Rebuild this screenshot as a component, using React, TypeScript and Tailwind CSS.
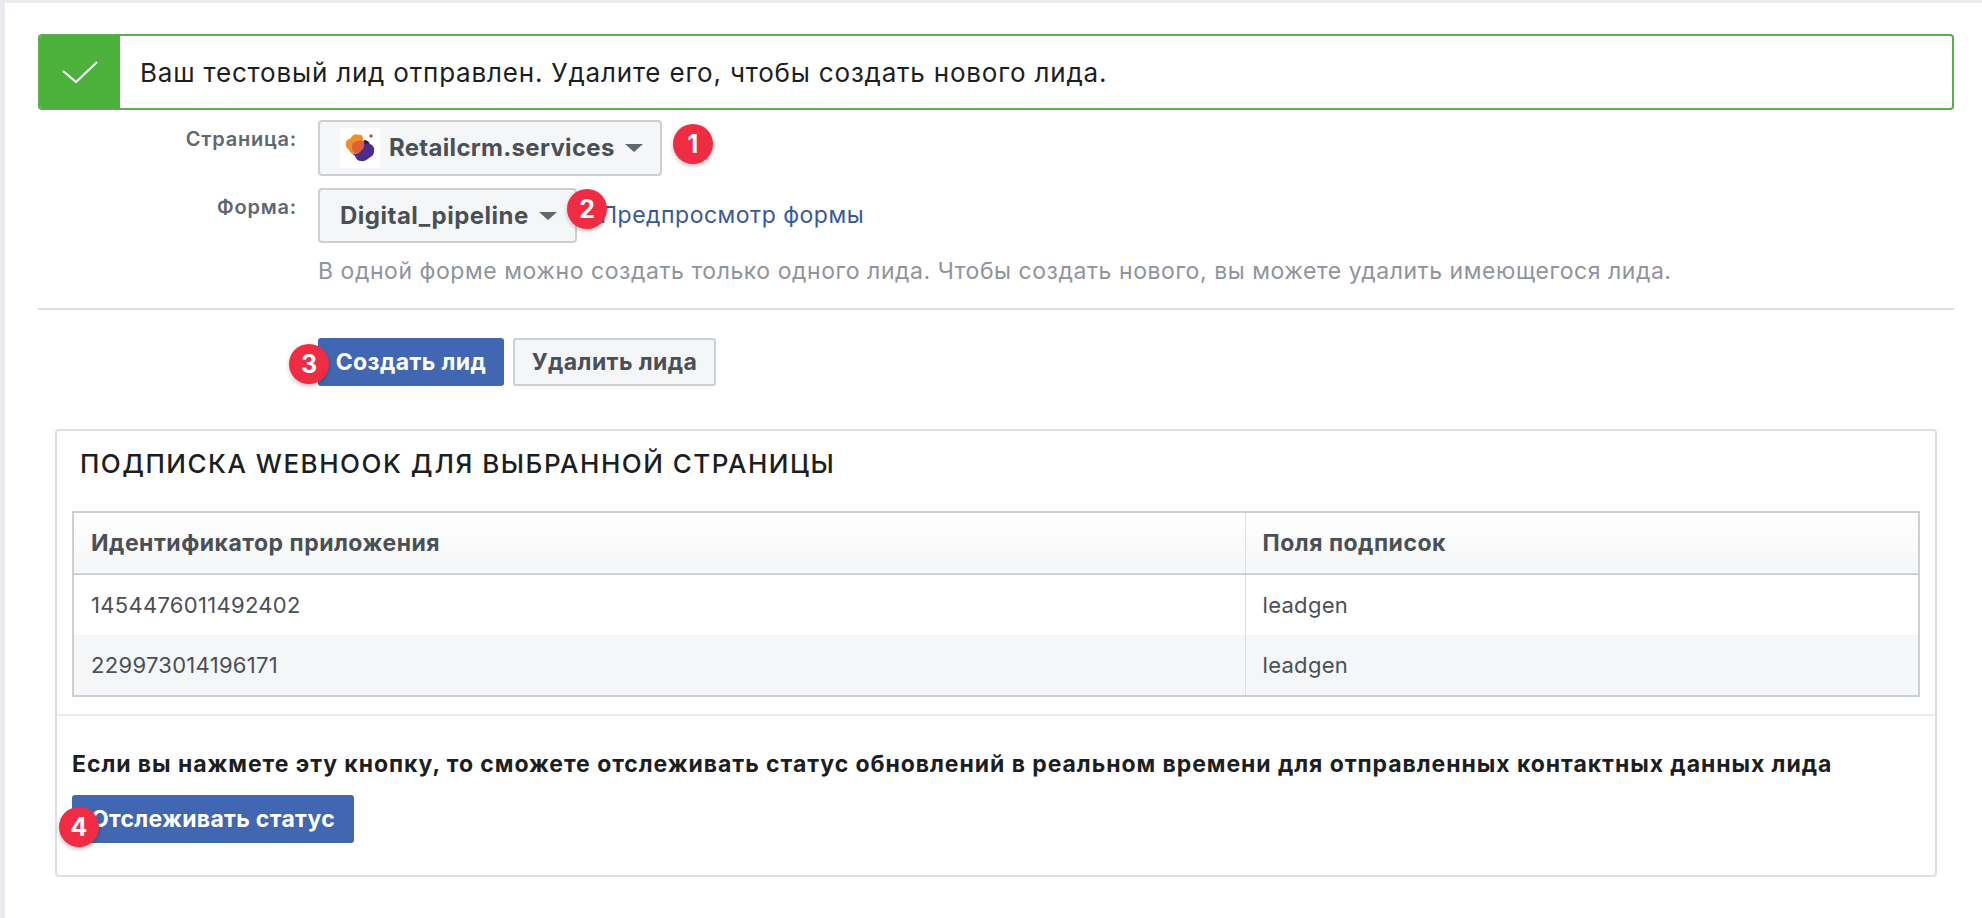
function Badge({ n, className }: { n: number; className: string }) {
  return (
    <span
      className={`absolute z-10 flex h-10 w-10 items-center justify-center rounded-full bg-[#f02c42] text-[25px] leading-none font-bold text-white shadow-[0_2px_4px_rgba(0,0,0,0.25)] ${className}`}
    >
      {n}
    </span>
  )
}

function Caret() {
  return <span className="ml-[10px] h-0 w-0 border-x-[9px] border-t-[8px] border-x-transparent border-t-[#606770]" />
}

function Logo() {
  return (
    <span className="mr-[9px] flex h-10 w-10 items-center justify-center bg-white">
      <svg viewBox="0 0 40 40" className="h-10 w-10">
        <path d="M12 23c2-5 7-8 12-10 3-1 5 0 6 3 3 1 5 4 4 8 0 3-3 5-5 6-2 2-6 4-8 3-3 0-5-2-6-5-2-1-3-3-3-5z" fill="#4f2a8f" />
        <path d="M6 15c0-3 3-4 5-5 1-3 5-5 8-3 3-1 4 2 4 5 1 3 1 6-1 9-2 3-4 5-7 5-3 1-5-2-6-4-2-2-4-4-3-7z" fill="#ee8f2e" />
        <path d="M13 15c3-2 7-3 10-2 2 3 1 7-1 9-2 2-4 3-7 3-2-1-3-3-3-5 0-2 0-4 1-5z" fill="#dd5f3b" />
        <path d="M24 12c2 0 4 1 5 3-2 1-4 1-5 0z" fill="#2a2338" />
        <circle cx="31" cy="8" r="1.8" fill="#c8553d" />
      </svg>
    </span>
  )
}

const rows = [
  ['1454476011492402', 'leadgen'],
  ['229973014196171', 'leadgen'],
]

export default function App() {
  return (
    <div className="h-[918px] overflow-hidden border-t-[3px] border-l-[5px] border-[#e9ebee] bg-white pt-[31px] pr-[28px] pl-[33px] font-['Inter','Liberation_Sans',sans-serif]">
      <div className="flex h-[76px] overflow-hidden rounded-[4px] border-2 border-[#5aae4c]">
        <div className="flex w-[80px] items-center justify-center bg-[#4cb13a]">
          <svg viewBox="0 0 36 22" className="h-[22px] w-9" fill="none" stroke="white" strokeWidth="2.2">
            <path d="M1 10l13 11L35 1" />
          </svg>
        </div>
        <p className="flex items-center pl-[20px] text-[26px] tracking-[0.8px] text-[#1c1e21]">
          Ваш тестовый лид отправлен. Удалите его, чтобы создать нового лида.
        </p>
      </div>

      <div className="mt-[10px] flex">
        <div className="w-[259px] pt-[9px] text-right text-[20px] leading-[21px] font-semibold tracking-[0.8px] text-[#606770]">Страница:</div>
        <div className="relative ml-[21px]">
          <button
            type="button"
            className="flex h-[56px] w-[344px] items-center rounded-[4px] border-2 border-[#ccd0d5] bg-[#f5f6f7] pl-[20px] text-[24px] font-bold tracking-[0.3px] text-[#4b4f56]"
          >
            <Logo />
            Retailcrm.services
            <Caret />
          </button>
          <Badge n={1} className="top-[4px] left-[355px]" />
        </div>
      </div>

      <div className="mt-[12px] flex">
        <div className="w-[259px] pt-[9px] text-right text-[20px] leading-[21px] font-semibold tracking-[0.8px] text-[#606770]">Форма:</div>
        <div className="relative ml-[21px] flex">
          <button
            type="button"
            className="flex h-[55px] w-[259px] items-center rounded-[4px] border-2 border-[#ccd0d5] bg-[#f5f6f7] pl-[20px] text-[24px] font-bold tracking-[0.5px] text-[#4b4f56]"
          >
            Digital_pipeline
            <Caret />
          </button>
          <a className="mt-[13px] ml-[23px] text-[23px] leading-[28px] tracking-[0.5px] text-[#385898]">Предпросмотр формы</a>
          <Badge n={2} className="top-[1px] left-[249px]" />
        </div>
      </div>

      <p className="mt-[15px] pl-[280px] text-[23px] leading-[26px] tracking-[0.55px] text-[#90949c]">
        В одной форме можно создать только одного лида. Чтобы создать нового, вы можете удалить имеющегося лида.
      </p>

      <div className="mt-[24px] h-[2px] bg-[#dddfe2]" />

      <div className="relative mt-[28px] flex gap-[9px] pl-[280px]">
        <button type="button" className="flex h-[48px] w-[186px] items-center justify-center rounded-[3px] bg-[#4267b2] text-[23px] font-bold tracking-[0.4px] text-white">
          Создать лид
        </button>
        <button type="button" className="flex h-[48px] w-[203px] items-center justify-center rounded-[3px] border-2 border-[#ccd0d5] bg-[#f5f6f7] text-[23px] font-bold tracking-[0.4px] text-[#4b4f56]">
          Удалить лида
        </button>
        <Badge n={3} className="top-[6px] left-[251px]" />
      </div>

      <section className="mt-[43px] ml-[17px] h-[448px] w-[1882px] rounded-[4px] border-2 border-[#dddfe2]">
        <h2 className="pt-[18px] pl-[23px] text-[26px] leading-[30px] font-medium tracking-[1.5px] text-[#1c1e21]">ПОДПИСКА WEBHOOK ДЛЯ ВЫБРАННОЙ СТРАНИЦЫ</h2>
        <div className="mx-[15px] mt-[32px]">
          <table className="w-full table-fixed border-collapse border-2 border-[#ccd0d5] text-left">
            <thead>
              <tr className="h-[62px] border-b-2 border-[#ccd0d5] bg-gradient-to-b from-white to-[#f5f6f7] text-[23px] tracking-[0.5px] text-[#4b4f56]">
                <th className="w-[1172px] border-r border-[#dddfe2] pl-[17px] font-bold">Идентификатор приложения</th>
                <th className="pl-[17px] font-bold">Поля подписок</th>
              </tr>
            </thead>
            <tbody className="text-[22px] tracking-[0.3px] text-[#4b4f56]">
              {rows.map((row, i) => (
                <tr key={row[0]} className={`h-[61px] ${i === 1 ? 'bg-[#f5f6f7]' : 'bg-white'}`}>
                  <td className="border-r border-[#dddfe2] pl-[17px]">{row[0]}</td>
                  <td className="pl-[17px]">{row[1]}</td>
                </tr>
              ))}
            </tbody>
          </table>
        </div>
        <div className="mt-[17px] border-t-2 border-[#e9ebee] px-[15px] pt-[35px]">
          <p className="text-[23px] leading-[26px] font-bold tracking-[0.94px] text-[#1c1e21]">
            Если вы нажмете эту кнопку, то сможете отслеживать статус обновлений в реальном времени для отправленных контактных данных лида
          </p>
          <div className="relative mt-[18px]">
            <button type="button" className="flex h-[48px] w-[282px] items-center justify-center rounded-[3px] bg-[#4267b2] text-[23px] font-bold tracking-[0.3px] text-white">
              Отслеживать статус
            </button>
            <Badge n={4} className="top-[12px] left-[-13px]" />
          </div>
        </div>
      </section>
    </div>
  )
}
